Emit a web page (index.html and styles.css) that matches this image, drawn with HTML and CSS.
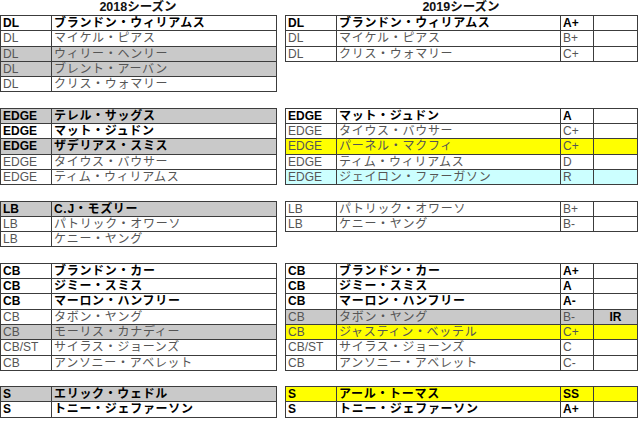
FILE: index.html
```html
<!DOCTYPE html>
<html lang="ja">
<head>
<meta charset="utf-8">
<link rel="stylesheet" href="styles.css">
</head>
<body>
<div class="sheet">
  <div class="col-head">2018シーズン</div>
  <div class="col-head">2019シーズン</div>

  <table class="t left">
    <tr class="b"><td class="pos">DL</td><td class="nm">ブランドン・ウィリアムス</td></tr>
    <tr><td class="pos">DL</td><td class="nm">マイケル・ピアス</td></tr>
    <tr class="g"><td class="pos">DL</td><td class="nm">ウィリー・ヘンリー</td></tr>
    <tr class="g"><td class="pos">DL</td><td class="nm">ブレント・アーバン</td></tr>
    <tr><td class="pos">DL</td><td class="nm">クリス・ウォマリー</td></tr>
  </table>
  <table class="t right">
    <tr class="b"><td class="pos">DL</td><td class="nm">ブランドン・ウィリアムス</td><td class="gr">A+</td><td class="ex"></td></tr>
    <tr><td class="pos">DL</td><td class="nm">マイケル・ピアス</td><td class="gr">B+</td><td class="ex"></td></tr>
    <tr><td class="pos">DL</td><td class="nm">クリス・ウォマリー</td><td class="gr">C+</td><td class="ex"></td></tr>
  </table>

  <table class="t left">
    <tr class="b g"><td class="pos">EDGE</td><td class="nm">テレル・サッグス</td></tr>
    <tr class="b"><td class="pos">EDGE</td><td class="nm">マット・ジュドン</td></tr>
    <tr class="b g"><td class="pos">EDGE</td><td class="nm">ザデリアス・スミス</td></tr>
    <tr><td class="pos">EDGE</td><td class="nm">タイウス・バウサー</td></tr>
    <tr><td class="pos">EDGE</td><td class="nm">ティム・ウィリアムス</td></tr>
  </table>
  <table class="t right">
    <tr class="b"><td class="pos">EDGE</td><td class="nm">マット・ジュドン</td><td class="gr">A</td><td class="ex"></td></tr>
    <tr><td class="pos">EDGE</td><td class="nm">タイウス・バウサー</td><td class="gr">C+</td><td class="ex"></td></tr>
    <tr class="y"><td class="pos">EDGE</td><td class="nm">パーネル・マクフィ</td><td class="gr">C+</td><td class="ex"></td></tr>
    <tr><td class="pos">EDGE</td><td class="nm">ティム・ウィリアムス</td><td class="gr">D</td><td class="ex"></td></tr>
    <tr class="c"><td class="pos">EDGE</td><td class="nm">ジェイロン・ファーガソン</td><td class="gr">R</td><td class="ex"></td></tr>
  </table>

  <table class="t left">
    <tr class="b g"><td class="pos">LB</td><td class="nm">C.J・モズリー</td></tr>
    <tr><td class="pos">LB</td><td class="nm">パトリック・オワーソ</td></tr>
    <tr><td class="pos">LB</td><td class="nm">ケニー・ヤング</td></tr>
  </table>
  <table class="t right">
    <tr><td class="pos">LB</td><td class="nm">パトリック・オワーソ</td><td class="gr">B+</td><td class="ex"></td></tr>
    <tr><td class="pos">LB</td><td class="nm">ケニー・ヤング</td><td class="gr">B-</td><td class="ex"></td></tr>
  </table>

  <table class="t left">
    <tr class="b"><td class="pos">CB</td><td class="nm">ブランドン・カー</td></tr>
    <tr class="b"><td class="pos">CB</td><td class="nm">ジミー・スミス</td></tr>
    <tr class="b"><td class="pos">CB</td><td class="nm">マーロン・ハンフリー</td></tr>
    <tr><td class="pos">CB</td><td class="nm">タボン・ヤング</td></tr>
    <tr class="g"><td class="pos">CB</td><td class="nm">モーリス・カナディー</td></tr>
    <tr><td class="pos">CB/ST</td><td class="nm">サイラス・ジョーンズ</td></tr>
    <tr><td class="pos">CB</td><td class="nm">アンソニー・アベレット</td></tr>
  </table>
  <table class="t right">
    <tr class="b"><td class="pos">CB</td><td class="nm">ブランドン・カー</td><td class="gr">A+</td><td class="ex"></td></tr>
    <tr class="b"><td class="pos">CB</td><td class="nm">ジミー・スミス</td><td class="gr">A</td><td class="ex"></td></tr>
    <tr class="b"><td class="pos">CB</td><td class="nm">マーロン・ハンフリー</td><td class="gr">A-</td><td class="ex"></td></tr>
    <tr class="g"><td class="pos">CB</td><td class="nm">タボン・ヤング</td><td class="gr">B-</td><td class="ex ir">IR</td></tr>
    <tr class="y"><td class="pos">CB</td><td class="nm">ジャスティン・ベッテル</td><td class="gr">C+</td><td class="ex"></td></tr>
    <tr><td class="pos">CB/ST</td><td class="nm">サイラス・ジョーンズ</td><td class="gr">C</td><td class="ex"></td></tr>
    <tr><td class="pos">CB</td><td class="nm">アンソニー・アベレット</td><td class="gr">C-</td><td class="ex"></td></tr>
  </table>

  <table class="t left">
    <tr class="b g"><td class="pos">S</td><td class="nm">エリック・ウェドル</td></tr>
    <tr class="b"><td class="pos">S</td><td class="nm">トニー・ジェファーソン</td></tr>
  </table>
  <table class="t right">
    <tr class="b y"><td class="pos">S</td><td class="nm">アール・トーマス</td><td class="gr">SS</td><td class="ex"></td></tr>
    <tr class="b"><td class="pos">S</td><td class="nm">トニー・ジェファーソン</td><td class="gr">A+</td><td class="ex"></td></tr>
  </table>
</div>
</body>
</html>
```

FILE: styles.css
```css
html, body {
  margin: 0;
  padding: 0;
  background: #ffffff;
}

body {
  font-family: "Liberation Sans", "Noto Sans CJK JP", sans-serif;
  font-size: 12px;
  color: #555555;
}

.sheet {
  display: grid;
  grid-template-columns: 276px 352px;
  column-gap: 9px;
  grid-template-rows: 15px;
  align-items: start;
}

.col-head {
  height: 15px;
  line-height: 15px;
  text-align: center;
  font-weight: bold;
  font-size: 12.5px;
  color: #111111;
}

.t {
  border-collapse: collapse;
  table-layout: fixed;
  margin-bottom: 15.3px;
}

.t.left {
  width: 276px;
}

.t.right {
  width: 352px;
}

.t td {
  box-sizing: border-box;
  border: 1px solid #3c3c3c;
  padding: 1px 0 0 2px;
  line-height: 13.3px;
  white-space: nowrap;
  overflow: hidden;
}

.t td.pos {
  width: 51px;
}

.t td.nm {
  letter-spacing: 0.7px;
}

.t td.gr {
  width: 33px;
}

.t td.ex {
  width: 44px;
  text-align: center;
  padding-left: 0;
}

.t.left td.nm {
  width: 225px;
}

.t.right td.nm {
  width: 224px;
}

.t tr.b td {
  font-weight: bold;
  color: #000000;
}

.t tr.g td {
  background: #c9c9c9;
}

.t tr.y td {
  background: #ffff00;
}

.t tr.c td {
  background: #ccffff;
}

.t td.ir {
  font-weight: bold;
  color: #000000;
}
```
